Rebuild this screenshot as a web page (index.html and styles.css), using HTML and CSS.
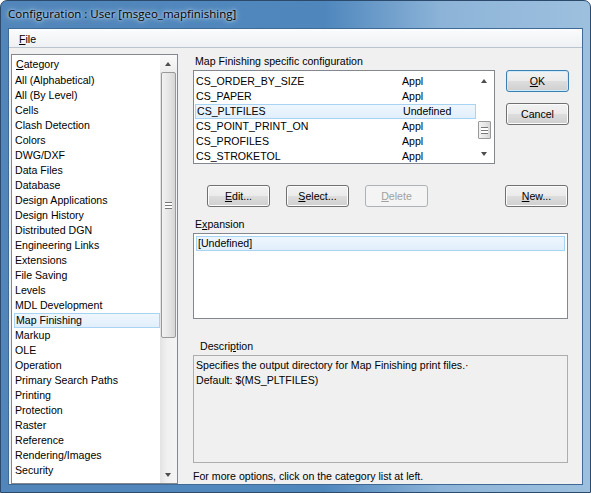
FILE: index.html
```html
<!DOCTYPE html>
<html>

<head>
    <title>Configuration : User [msgeo_mapfinishing]</title>
    <link rel="stylesheet" href="styles.css">
</head>

<body>
    <div class="window">
        <div class="titlebar">Configuration : User [msgeo_mapfinishing]</div>
        <div class="client">
            <div class="menubar"><span class="menu"><u>F</u>ile</span></div>
            <div class="main">
                <div class="catlist">
                    <div class="items">
                        <div class="head"><u>C</u>ategory</div>
                        <div class="item">All (Alphabetical)</div>
                        <div class="item">All (By Level)</div>
                        <div class="item">Cells</div>
                        <div class="item">Clash Detection</div>
                        <div class="item">Colors</div>
                        <div class="item">DWG/DXF</div>
                        <div class="item">Data Files</div>
                        <div class="item">Database</div>
                        <div class="item">Design Applications</div>
                        <div class="item">Design History</div>
                        <div class="item">Distributed DGN</div>
                        <div class="item">Engineering Links</div>
                        <div class="item">Extensions</div>
                        <div class="item">File Saving</div>
                        <div class="item">Levels</div>
                        <div class="item">MDL Development</div>
                        <div class="item selected">Map Finishing</div>
                        <div class="item">Markup</div>
                        <div class="item">OLE</div>
                        <div class="item">Operation</div>
                        <div class="item">Primary Search Paths</div>
                        <div class="item">Printing</div>
                        <div class="item">Protection</div>
                        <div class="item">Raster</div>
                        <div class="item">Reference</div>
                        <div class="item">Rendering/Images</div>
                        <div class="item">Security</div>
                    </div>
                    <div class="vscroll big">
                        <div class="arrow up"></div>
                        <div class="track">
                            <div class="thumb" style="height: 266px"><span class="grip"></span></div>
                        </div>
                        <div class="arrow down"></div>
                    </div>
                </div>

                <div class="right">
                    <div class="toprow">
                        <div class="vars">
                            <div class="label">Map Finishing specific configuration</div>
                            <div class="varlist">
                                <div class="rows">
                                    <div class="row"><span class="name">CS_ORDER_BY_SIZE</span><span>Appl</span></div>
                                    <div class="row"><span class="name">CS_PAPER</span><span>Appl</span></div>
                                    <div class="row selected"><span class="name">CS_PLTFILES</span><span>Undefined</span></div>
                                    <div class="row"><span class="name">CS_POINT_PRINT_ON</span><span>Appl</span></div>
                                    <div class="row"><span class="name">CS_PROFILES</span><span>Appl</span></div>
                                    <div class="row"><span class="name">CS_STROKETOL</span><span>Appl</span></div>
                                </div>
                                <div class="vscroll small">
                                    <div class="arrow up"></div>
                                    <div class="track">
                                        <div class="spacer" style="height: 32px"></div>
                                        <div class="thumb" style="height: 18px"><span class="grip"></span></div>
                                    </div>
                                    <div class="arrow down"></div>
                                </div>
                            </div>
                        </div>
                        <div class="okcancel">
                            <button class="btn default"><u>O</u>K</button>
                            <button class="btn">Cancel</button>
                        </div>
                    </div>

                    <div class="btnrow">
                        <button class="btn"><u>E</u>dit...</button>
                        <button class="btn"><u>S</u>elect...</button>
                        <button class="btn disabled"><u>D</u>elete</button>
                        <span class="fill"></span>
                        <button class="btn"><u>N</u>ew...</button>
                    </div>

                    <div class="label">E<u>x</u>pansion</div>
                    <div class="expansion">
                        <div class="exprow">[Undefined]</div>
                    </div>

                    <div class="label desc-label">Descri<u>p</u>tion</div>
                    <div class="description">
                        Specifies the output directory for Map Finishing print files.&middot;<br>
                        Default: $(MS_PLTFILES)
                    </div>

                    <div class="footer">For more options, click on the category list at left.</div>
                </div>
            </div>
        </div>
    </div>
</body>

</html>
```

FILE: styles.css
```css
* {
    box-sizing: border-box;
}

body {
    margin: 0;
    background: #ffffff;
    font-family: "Liberation Sans", Arial, sans-serif;
    font-size: 10.6px;
    color: #000;
}

.window {
    width: 591px;
    height: 493px;
    padding: 0 7px 7px 7px;
    border: 1px solid #2c4a6b;
    border-radius: 7px 7px 0 0;
    background: linear-gradient(90deg, #5286ba 0%, #4f87bd 55%, #8db4d8 75%, #9dc0de 100%);
    display: flex;
    flex-direction: column;
}

.titlebar {
    height: 27px;
    padding: 5px 0 0 0;
    font-family: "Open Sans", "DejaVu Sans", sans-serif;
    font-size: 11.5px;
    color: #000;
    text-shadow: 0 0 6px #cfe0f0, 0 0 3px #dfeaf5;
}

.client {
    flex: 1;
    background: #f0f0f0;
    border: 1px solid #3f6a96;
    display: flex;
    flex-direction: column;
}

.menubar {
    height: 19px;
    background: linear-gradient(#fbfcfd, #eef0f3);
    border-bottom: 1px solid #b9c4cf;
    padding: 4px 0 0 10px;
}

.main {
    flex: 1;
    display: flex;
    padding: 6px 0 0 2px;
}

/* category list */
.catlist {
    width: 167px;
    height: 430px;
    border: 1px solid #828790;
    background: #fff;
    display: flex;
}

.items {
    flex: 1;
    padding: 1px 0 0 2px;
}

.head {
    height: 17px;
    padding: 2px 0 0 2px;
}

.item {
    height: 15px;
    line-height: 15px;
    padding-left: 1px;
    white-space: nowrap;
}

.selected {
    background: linear-gradient(#eef6fd, #e1effc);
    border: 1px solid #a8d3f2;
    line-height: 13px;
}

/* scrollbars */
.vscroll {
    width: 17px;
    display: flex;
    flex-direction: column;
    background: linear-gradient(90deg, #e3e3e3, #f0f0f0 40%, #f4f4f4);
}

.vscroll .arrow {
    height: 17px;
    position: relative;
}

.vscroll .arrow::after {
    content: "";
    position: absolute;
    left: 5px;
    border-left: 3.5px solid transparent;
    border-right: 3.5px solid transparent;
}

.vscroll .up::after {
    top: 7px;
    border-bottom: 4px solid #4d4d4d;
}

.vscroll .down::after {
    top: 7px;
    border-top: 4px solid #4d4d4d;
}

.vscroll .track {
    flex: 1;
    padding: 0 1px;
}

.thumb {
    border: 1px solid #999;
    border-radius: 2px;
    background: linear-gradient(90deg, #f2f2f2, #e6e6e6 50%, #d6d6d6);
    display: flex;
    align-items: center;
    justify-content: center;
}

.grip {
    width: 7px;
    height: 7px;
    border-top: 1px solid #777;
    border-bottom: 1px solid #777;
    background: linear-gradient(#fff 0 2px, #777 2px 3px, #fff 3px);
}

.big .arrow.up {
    background: linear-gradient(#fafafa, #ededed);
}

/* right side */
.right {
    width: 376px;
    margin-left: 15px;
    display: flex;
    flex-direction: column;
}

.toprow {
    display: flex;
}

.vars {
    width: 302px;
}

.label {
    height: 16px;
    padding: 1px 0 0 2px;
}

.varlist {
    height: 94px;
    border: 1px solid #828790;
    background: #fff;
    display: flex;
    padding: 1px;
}

.rows {
    flex: 1;
    padding-top: 2px;
}

.row {
    height: 15px;
    line-height: 15px;
    display: flex;
    padding-left: 1px;
}

.row.selected {
    line-height: 13px;
}

.row .name {
    width: 206px;
}

.varlist .vscroll {
    background: #fff;
}

.varlist .thumb {
    border-radius: 1px;
    margin: 0 1px;
}

.okcancel {
    margin: 16px 0 0 11px;
    display: flex;
    flex-direction: column;
    gap: 11px;
}

.btn {
    width: 63px;
    height: 22px;
    padding: 0;
    border: 1px solid #707070;
    border-radius: 3px;
    background: linear-gradient(#f2f2f2 0%, #ebebeb 48%, #dddddd 52%, #cfcfcf 100%);
    box-shadow: inset 0 0 0 1px #fcfcfc;
    font-family: "Liberation Sans", Arial, sans-serif;
    font-size: 10.6px;
    color: #000;
}

.btn.default {
    border-color: #3c7fb1;
    box-shadow: inset 0 0 0 1px #cdeafb;
}

.btn.disabled {
    color: #a0a0a0;
    border-color: #adb2b5;
    background: #f4f4f4;
    box-shadow: none;
}

.btnrow {
    margin: 21px 0 10px 14px;
    display: flex;
    gap: 16px;
}

.btnrow .fill {
    flex: 1;
}

.btnrow .btn:last-child {
    margin-right: 1px;
}

.expansion {
    height: 86px;
    width: 375px;
    border: 1px solid #828790;
    background: #fff;
    padding: 2px;
}

.exprow {
    height: 15px;
    line-height: 13px;
    background: linear-gradient(#eef6fd, #e1effc);
    border: 1px solid #a8d3f2;
    padding-left: 1px;
}

.desc-label {
    margin-top: 20px;
    padding-left: 7px;
}

.description {
    height: 108px;
    width: 375px;
    border: 1px solid #adadad;
    padding: 2px 2px;
    line-height: 15px;
}

.footer {
    margin-top: 7px;
}
```
